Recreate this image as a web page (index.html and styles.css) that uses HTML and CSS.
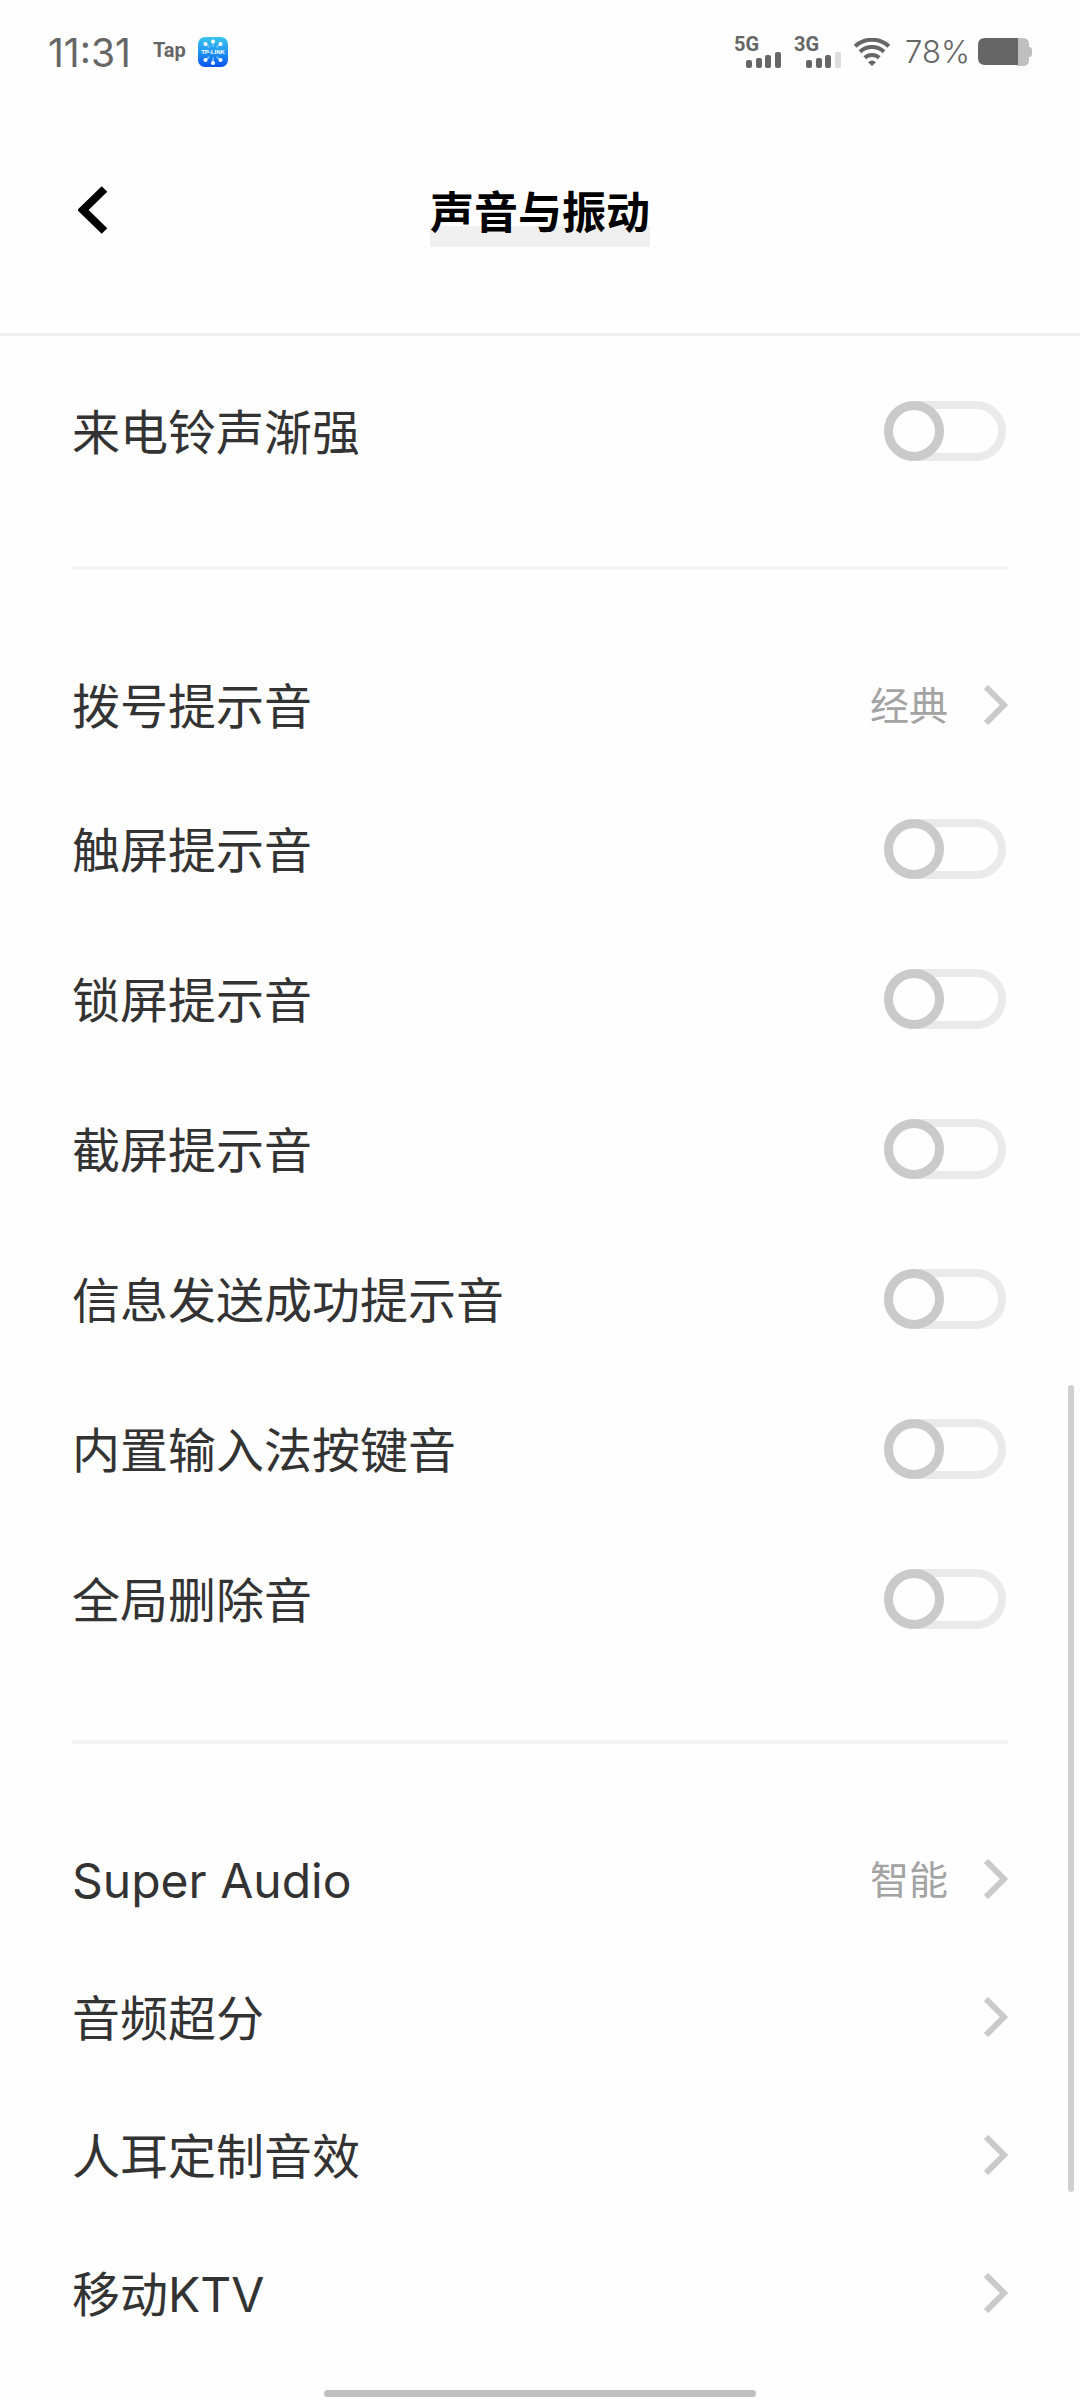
FILE: index.html
```html
<!DOCTYPE html>
<html lang="zh-CN">
<head>
<meta charset="utf-8">
<meta name="viewport" content="width=device-width, initial-scale=1">
<title>声音与振动</title>
<link rel="stylesheet" href="styles.css">
</head>
<body>
<div class="status">
  <div class="status-left">
    <span class="clock">11:31</span>
    <span class="tap">Tap</span>
    <svg class="app-icon" width="30" height="30" viewBox="0 0 30 30" role="img" aria-label="TP-LINK">
      <defs><linearGradient id="sky" x1="0" y1="0" x2="0" y2="1"><stop offset="0" stop-color="#3cc4ee"/><stop offset=".5" stop-color="#2196f3"/><stop offset="1" stop-color="#0a50f0"/></linearGradient></defs>
      <rect width="30" height="30" rx="7" fill="url(#sky)"/>
      <g stroke="#7cc8fb" stroke-width="1.500" stroke-linecap="round"><path d="M15 4v5M8 7l3 3M22 7l-3 3M15 26v-5M8 23l3-3M22 23l-3-3"/></g>
      <g fill="#fff"><circle cx="15" cy="4.500" r="2"/><circle cx="7.500" cy="7" r="2"/><circle cx="22.500" cy="7" r="2"/><circle cx="15" cy="26" r="2"/><circle cx="7.500" cy="23" r="2"/><circle cx="22.500" cy="23" r="2"/></g>
      <text class="app-icon-text" x="15" y="17" text-anchor="middle">TP-LINK</text>
    </svg>
  </div>
  <div class="status-right">
    <div class="signal">
      <span class="net">5G</span>
      <svg class="bars" width="36" height="16" viewBox="0 0 36 16" aria-hidden="true"><g fill="#666"><rect y="8" width="6" height="8" rx="2"/><rect x="10" y="6" width="6" height="10" rx="2"/><rect x="19" y="3" width="6" height="13" rx="2"/><rect x="29" width="6" height="16" rx="2"/></g></svg>
    </div>
    <div class="signal">
      <span class="net">3G</span>
      <svg class="bars" width="36" height="16" viewBox="0 0 36 16" aria-hidden="true"><g fill="#666"><rect y="8" width="6" height="8" rx="2"/><rect x="10" y="6" width="6" height="10" rx="2"/><rect x="19" y="3" width="6" height="13" rx="2"/><rect x="29" width="6" height="16" rx="2" fill="#ddd"/></g></svg>
    </div>
    <svg class="wifi" width="36" height="28" viewBox="0 0 36 28" aria-hidden="true"><g fill="none" stroke="#666" stroke-width="4"><path d="M1.200 8.200a25 25 0 0 1 33.600 0M6 13.800a17.500 17.500 0 0 1 24 0M10.800 19.800a10.500 10.500 0 0 1 14.400 0"/></g><path d="M14 24.200Q18 21 22 24.200L18 28z" fill="#666"/></svg>
    <span class="percent">78%</span>
    <svg width="54" height="28" viewBox="0 0 54 28" aria-hidden="true"><path d="M39 0h6q6 0 6 6v3q3 0 3 3v4q0 3-3 3v3q0 6-6 6h-6z" fill="#bfbfbf"/><path d="M40 0H7Q0 0 0 7v13q0 7 7 7h33z" fill="#666"/></svg>
  </div>
</div>
<header class="header">
  <button class="back" type="button" aria-label="返回"><svg width="30" height="48" viewBox="0 0 30 48" aria-hidden="true"><path d="M26.500 3L5 24l21.500 21" fill="none" stroke="#000" stroke-width="8"/></svg></button>
  <h1 class="title">声音与振动</h1>
</header>
<main class="list">
  <section class="group">
    <label class="row"><span class="name">来电铃声渐强</span><input class="switch" type="checkbox" role="switch"></label>
  </section>
  <section class="group">
    <a class="row" href="#dial"><span class="name">拨号提示音</span><span class="value">经典</span><svg class="chevron" width="24" height="40" viewBox="0 0 24 40" aria-hidden="true"><path d="M2 2l18 18L2 38"/></svg></a>
    <label class="row row-tall"><span class="name">触屏提示音</span><input class="switch" type="checkbox" role="switch"></label>
    <label class="row row-tall"><span class="name">锁屏提示音</span><input class="switch" type="checkbox" role="switch"></label>
    <label class="row row-tall"><span class="name">截屏提示音</span><input class="switch" type="checkbox" role="switch"></label>
    <label class="row row-tall"><span class="name">信息发送成功提示音</span><input class="switch" type="checkbox" role="switch"></label>
    <label class="row row-tall"><span class="name">内置输入法按键音</span><input class="switch" type="checkbox" role="switch"></label>
    <label class="row row-tall"><span class="name">全局删除音</span><input class="switch" type="checkbox" role="switch"></label>
  </section>
  <section class="group">
    <a class="row" href="#super-audio"><span class="name">Super Audio</span><span class="value">智能</span><svg class="chevron" width="24" height="40" viewBox="0 0 24 40" aria-hidden="true"><path d="M2 2l18 18L2 38"/></svg></a>
    <a class="row" href="#upscale"><span class="name">音频超分</span><svg class="chevron" width="24" height="40" viewBox="0 0 24 40" aria-hidden="true"><path d="M2 2l18 18L2 38"/></svg></a>
    <a class="row" href="#ear"><span class="name">人耳定制音效</span><svg class="chevron" width="24" height="40" viewBox="0 0 24 40" aria-hidden="true"><path d="M2 2l18 18L2 38"/></svg></a>
    <a class="row" href="#ktv"><span class="name">移动KTV</span><svg class="chevron" width="24" height="40" viewBox="0 0 24 40" aria-hidden="true"><path d="M2 2l18 18L2 38"/></svg></a>
  </section>
</main>
<div class="scrollbar"></div>
<div class="home-bar"></div>
</body>
</html>
```
FILE: styles.css
```css
*,
*::before { box-sizing: border-box; }

body {
  margin: 0;
  background: #fefefe;
  color: #333;
  font-family: Inter, "Noto Sans CJK SC", sans-serif;
  font-size: 48px;
}

svg { display: block; flex: none; }

.status {
  display: flex;
  justify-content: space-between;
  align-items: center;
  height: 104px;
  padding: 0 48px;
  color: #666;
}

.status-left,
.status-right { display: flex; align-items: center; }

.clock { font-size: 39px; line-height: 44px; padding-top: 2px; margin-right: 22px; }
.tap { font: 700 20px/28px Roboto, sans-serif; padding-bottom: 4px; margin-right: 12px; }
.app-icon-text { font: 700 6px "Liberation Sans", sans-serif; fill: #fff; }

.signal {
  display: flex;
  flex-direction: column;
  width: 48px;
  height: 32px;
  margin-right: 12px;
}
.net { font: 700 20px/16px Roboto, sans-serif; }
.bars { align-self: flex-end; }
.wifi { margin-right: 15px; }
.percent { font-size: 31px; line-height: 40px; font-weight: 300; margin-right: 8px; }

.header {
  display: grid;
  grid-template-columns: 1fr auto 1fr;
  align-items: center;
  height: 232px;
  padding: 0 78px 17px;
  border-bottom: 3px solid #f0f0f0;
}
.back { justify-self: start; padding: 0; border: 0; background: none; }
.title {
  margin: 0;
  padding-top: 6px;
  color: #000;
  font-size: 44px;
  line-height: 68px;
  font-weight: 700;
  background: linear-gradient(#efefef, #efefef) bottom / 100% 21px no-repeat;
}

.list { padding: 26px 72px 36px; }
.group + .group {
  margin-top: 66px;
  padding-top: 66px;
  border-top: 4px solid #f4f4f4;
}

.row {
  display: flex;
  align-items: center;
  height: 138px;
  line-height: 72px;
  color: inherit;
  text-decoration: none;
}
.row-tall { height: 150px; }
.name { flex: 1; padding-top: 4px; }

.value { color: #a3a3a3; font-size: 39px; padding-top: 2px; margin-right: 36px; }
.chevron { fill: none; stroke: #cacaca; stroke-width: 6; }

.switch {
  appearance: none;
  flex: none;
  width: 122px;
  height: 60px;
  margin: 0 2px 0 0;
  border: 8px solid #eaeaea;
  border-radius: 30px;
}
.switch::before {
  content: "";
  display: block;
  width: 60px;
  height: 60px;
  margin: -8px;
  border: 9px solid #cacaca;
  border-radius: 50%;
  background: #fefefe;
}
.switch:checked::before { margin-left: 54px; }

.scrollbar {
  position: fixed;
  top: 1385px;
  right: 6px;
  width: 6px;
  height: 807px;
  border-radius: 3px;
  background: #d0d0d0;
}
.home-bar {
  position: fixed;
  bottom: 3px;
  left: 30%;
  width: 40%;
  height: 7px;
  border-radius: 4px;
  background: #c0c0c0;
}
```
